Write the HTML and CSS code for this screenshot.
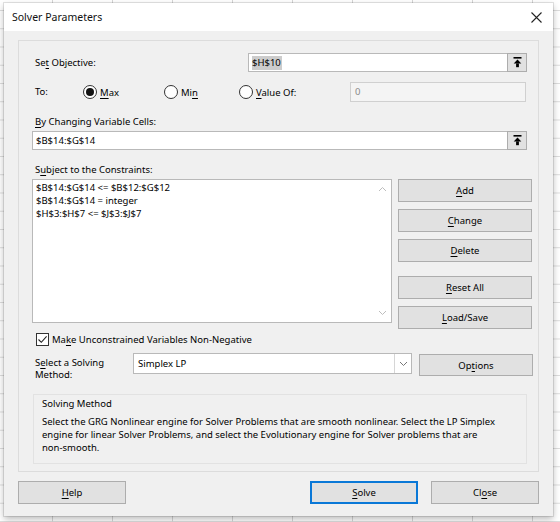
FILE: index.html
```html
<!DOCTYPE html>
<html>
<head>
<meta charset="utf-8">
<title>Solver Parameters</title>
<link rel="stylesheet" href="styles.css">
</head>
<body>
<div class="dialog">
  <div class="titlebar">
    <span class="title">Solver Parameters</span>
    <svg class="close" width="11" height="11" viewBox="0 0 11 11"><path d="M0.5 0.5 L10.5 10.5 M10.5 0.5 L0.5 10.5" stroke="#222" stroke-width="1.1" fill="none"/></svg>
  </div>
  <div class="main">
    <div class="group">
      <div class="row row-objective">
        <span class="lbl lbl-obj">Se<u>t</u> Objective:</span>
        <div class="refedit ref-obj">
          <span class="field"><span class="sel">$H$10</span></span>
          <span class="pick"><svg width="9" height="11" viewBox="0 0 9 11"><rect x="0.5" y="0" width="8" height="1.6" fill="#000"/><path d="M4.5 2.6 L8.3 6.6 L0.7 6.6 Z" fill="#000"/><rect x="3.1" y="6.4" width="2.8" height="3.8" fill="#000"/></svg></span>
        </div>
      </div>
      <div class="row row-to">
        <span class="lbl lbl-to">To:</span>
        <span class="opt opt-max"><span class="radio checked"></span><span class="opt-text"><u>M</u>ax</span></span>
        <span class="opt opt-min"><span class="radio"></span><span class="opt-text">Mi<u>n</u></span></span>
        <span class="opt opt-val"><span class="radio"></span><span class="opt-text"><u>V</u>alue Of:</span></span>
        <span class="valuebox">0</span>
      </div>
      <div class="row row-label"><span class="lbl"><u>B</u>y Changing Variable Cells:</span></div>
      <div class="row row-cells">
        <div class="refedit ref-cells">
          <span class="field">$B$14:$G$14</span>
          <span class="pick"><svg width="9" height="11" viewBox="0 0 9 11"><rect x="0.5" y="0" width="8" height="1.6" fill="#000"/><path d="M4.5 2.6 L8.3 6.6 L0.7 6.6 Z" fill="#000"/><rect x="3.1" y="6.4" width="2.8" height="3.8" fill="#000"/></svg></span>
        </div>
      </div>
      <div class="row row-label row-subject"><span class="lbl">S<u>u</u>bject to the Constraints:</span></div>
      <div class="row row-list">
        <div class="listbox">
          <div class="items">
            <div>$B$14:$G$14 &lt;= $B$12:$G$12</div>
            <div>$B$14:$G$14 = integer</div>
            <div>$H$3:$H$7 &lt;= $J$3:$J$7</div>
          </div>
          <div class="scroll">
            <svg width="9" height="6" viewBox="0 0 9 6"><path d="M1 5 L4.5 1.5 L8 5" stroke="#bdbdbd" stroke-width="1" fill="none"/></svg>
            <svg width="9" height="6" viewBox="0 0 9 6"><path d="M1 1 L4.5 4.5 L8 1" stroke="#bdbdbd" stroke-width="1" fill="none"/></svg>
          </div>
        </div>
        <div class="sidebtns">
          <span class="btn"><u>A</u>dd</span>
          <span class="btn"><u>C</u>hange</span>
          <span class="btn"><u>D</u>elete</span>
          <span class="btn btn-gap"><u>R</u>eset All</span>
          <span class="btn"><u>L</u>oad/Save</span>
        </div>
      </div>
      <div class="row row-check">
        <span class="checkbox"><svg width="11" height="11" viewBox="0 0 11 11"><path d="M1.5 5.5 L4.3 8.3 L9.6 2.4" stroke="#222" stroke-width="1.1" fill="none"/></svg></span>
        <span class="check-text">Ma<u>k</u>e Unconstrained Variables Non-Negative</span>
      </div>
      <div class="row row-select">
        <span class="lbl lbl-method">S<u>e</u>lect a Solving<br>Method:</span>
        <div class="combo">
          <span class="combo-text">Simplex LP</span>
          <span class="combo-arrow"><svg width="9" height="6" viewBox="0 0 9 6"><path d="M1 1 L4.5 4.5 L8 1" stroke="#777" stroke-width="1" fill="none"/></svg></span>
        </div>
        <span class="btn btn-options">Op<u>t</u>ions</span>
      </div>
      <div class="method-box">
        <div class="method-title">Solving Method</div>
        <div class="method-line">Select the GRG Nonlinear engine for Solver Problems that are smooth nonlinear. Select the LP Simplex</div>
        <div class="method-line">engine for linear Solver Problems, and select the Evolutionary engine for Solver problems that are</div>
        <div class="method-line">non-smooth.</div>
      </div>
    </div>
    <div class="footer">
      <span class="btn btn-foot"><u>H</u>elp</span>
      <span class="spacer"></span>
      <span class="btn btn-foot btn-default"><u>S</u>olve</span>
      <span class="btn btn-foot btn-close">Cl<u>o</u>se</span>
    </div>
  </div>
</div>
</body>
</html>
```
FILE: styles.css
```css
* { box-sizing: border-box; }

html, body {
  margin: 0;
}

body {
  width: 560px;
  height: 522px;
  overflow: hidden;
  padding: 3px 0 0 4px;
  background-color: #ffffff;
  background-image:
    linear-gradient(to right, #d6d6d6 1px, transparent 1px),
    linear-gradient(to bottom, #dcdcdc 1px, transparent 1px);
  background-size: 60px 18.25px;
  background-position: 52px 10px;
  font-family: "Noto Sans", "Open Sans", sans-serif;
  font-size: 9.5px;
  color: #000;
}

.dialog {
  width: 549px;
  height: 513px;
  background: #f0f0f0;
  box-shadow: 0 0 0 1px rgba(0,0,0,0.10), 0 3px 7px rgba(0,0,0,0.28);
  display: flex;
  flex-direction: column;
}

.titlebar {
  height: 28px;
  background: #ffffff;
  display: flex;
  align-items: center;
  justify-content: space-between;
  padding: 0 11px 0 8px;
}

.title {
  font-size: 10.5px;
  color: #111;
}

.main {
  padding: 9px 14px 0 14px;
}

.group {
  height: 432px;
  border: 1px solid #dcdcdc;
  padding-left: 13px;
  padding-top: 12px;
}

.row {
  display: flex;
  align-items: center;
}

.lbl {
  padding-left: 3px;
  line-height: 14px;
  white-space: nowrap;
}

u { text-decoration-thickness: 1px; text-underline-offset: 1.5px; }

/* objective */
.row-objective { height: 19px; }
.lbl-obj { width: 216px; }

.refedit {
  height: 19px;
  border: 1px solid #b9b9b9;
  background: #fff;
  display: flex;
  align-items: stretch;
}
.ref-obj { width: 279px; }
.ref-cells { width: 495px; }

.field {
  flex: 1;
  display: flex;
  align-items: center;
  padding-left: 3px;
  white-space: nowrap;
}
.sel {
  background: #cccccc;
  line-height: 14px;
  padding: 0 1px 0 0;
}

.pick {
  width: 20px;
  margin: -1px -1px -1px 0;
  border: 1px solid #adadad;
  background: #e1e1e1;
  display: flex;
  align-items: center;
  justify-content: center;
}

/* To row */
.row-to {
  height: 20px;
  margin-top: 10px;
}
.lbl-to { width: 51px; }
.opt {
  display: flex;
  align-items: center;
  gap: 2px;
}
.opt-max { width: 81px; }
.opt-min { width: 75px; }
.opt-val { width: 111px; }
.radio {
  width: 14px;
  height: 14px;
  border: 1px solid #333;
  border-radius: 50%;
  background: #fff;
  display: inline-flex;
  align-items: center;
  justify-content: center;
}
.radio.checked::after {
  content: "";
  width: 8px;
  height: 8px;
  border-radius: 50%;
  background: #111;
}
.opt-text { padding-left: 1px; white-space: nowrap; }
.valuebox {
  width: 176px;
  height: 20px;
  border: 1px solid #d0d0d0;
  background: #f4f4f4;
  color: #8a8a8a;
  padding-left: 4px;
  line-height: 18px;
}

/* labels */
.row-label { margin-top: 13px; height: 14px; }
.row-cells { margin-top: 2px; }

/* constraints */
.row-list {
  margin-top: 2px;
  height: 150px;
  align-items: flex-start;
}
.listbox {
  width: 360px;
  height: 144px;
  border: 1px solid #b9b9b9;
  background: #fff;
  display: flex;
}
.items {
  flex: 1;
  padding: 1px 0 0 3px;
  line-height: 13px;
  white-space: nowrap;
}
.scroll {
  width: 17px;
  display: flex;
  flex-direction: column;
  justify-content: space-between;
  align-items: center;
  padding: 6px 0 6px 0;
}
.sidebtns {
  margin-left: 6px;
  display: flex;
  flex-direction: column;
  gap: 7px;
}
.btn {
  display: flex;
  align-items: center;
  justify-content: center;
  height: 23px;
  border: 1px solid #adadad;
  background: #e1e1e1;
  white-space: nowrap;
}
.sidebtns .btn { width: 134px; }
.sidebtns .btn-gap { margin-top: 7px; }

/* checkbox */
.row-check {
  margin-top: 3px;
  height: 14px;
}
.checkbox {
  width: 13px;
  height: 13px;
  margin-left: 4px;
  border: 1px solid #333;
  background: #fff;
  display: flex;
  align-items: center;
  justify-content: center;
}
.check-text { margin-left: 3px; white-space: nowrap; }

/* select row */
.row-select {
  margin-top: 7px;
  height: 25px;
  align-items: flex-start;
}
.lbl-method {
  width: 101px;
  line-height: 12px;
  margin-top: 4px;
}
.combo {
  width: 279px;
  height: 21px;
  border: 1px solid #b9b9b9;
  background: #fff;
  display: flex;
}
.combo-text {
  flex: 1;
  padding-left: 4px;
  line-height: 19px;
}
.combo-arrow {
  width: 17px;
  border-left: 1px solid #d6d6d6;
  display: flex;
  align-items: center;
  justify-content: center;
}
.btn-options {
  width: 114px;
  height: 22px;
  margin: 1px 0 0 7px;
}

/* method box */
.method-box {
  margin: 16px 0 0 1px;
  width: 494px;
  height: 70px;
  border: 1px solid #e2e2e2;
  padding: 2px 0 0 8px;
}
.method-title {
  line-height: 14px;
  margin-bottom: 4px;
}
.method-line {
  line-height: 13px;
  white-space: nowrap;
}

/* footer */
.footer {
  margin-top: 9px;
  display: flex;
}
.btn-foot { width: 108px; }
.spacer { flex: 1; }
.btn-default { border: 2px solid #0a78d7; }
.btn-close { margin-left: 13px; }
```
